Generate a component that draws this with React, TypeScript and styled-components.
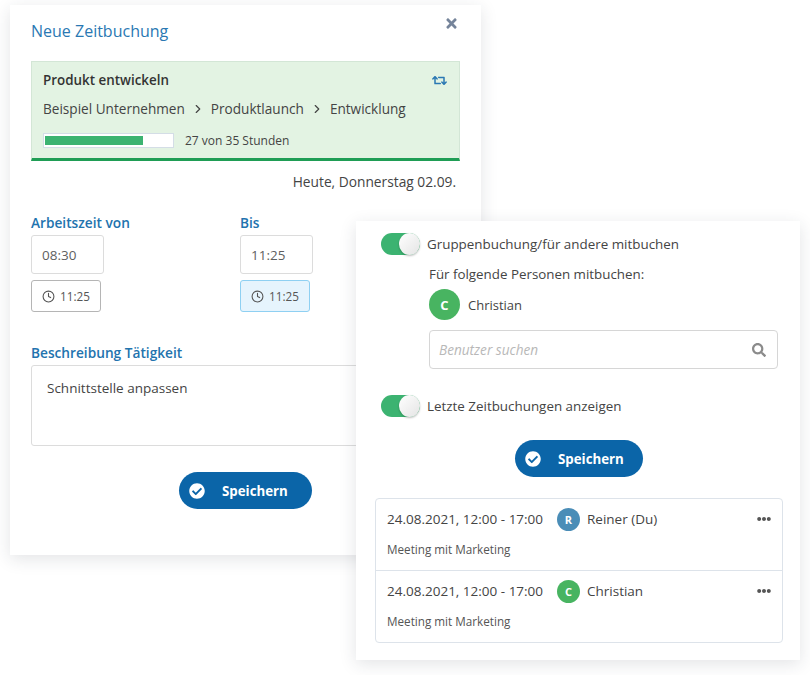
import React from "react";
import styled, { createGlobalStyle } from "styled-components";
import { Clock, ChevronRight } from "lucide-react";
import { FaCheckCircle, FaEllipsisH, FaRetweet, FaSearch, FaTimes } from "react-icons/fa";

const GlobalStyle = createGlobalStyle`
  html, body { margin: 0; padding: 0; background: #fff; }
  body { font-family: "Open Sans", "Noto Sans", sans-serif; color: #3c4043; }
  * { box-sizing: border-box; }
`;

const Canvas = styled.div`
  position: relative;
  width: 810px;
  height: 675px;
  overflow: hidden;
`;

const Card = styled.section`
  position: absolute;
  background: #fff;
  box-shadow: 0 4px 16px rgba(40, 50, 60, 0.13);
`;

const BookingCard = styled(Card)`
  left: 10px;
  top: 5px;
  width: 471px;
  height: 550px;
  padding: 14px 21px 0;
`;

const GroupCard = styled(Card)`
  left: 356px;
  top: 221px;
  width: 444px;
  height: 439px;
  padding: 12px 17px 0 19px;
`;

const Header = styled.header`
  display: flex;
  justify-content: space-between;
  align-items: flex-start;
  height: 42px;
`;

const Title = styled.h1`
  margin: 0;
  font-size: 16px;
  line-height: 24px;
  font-weight: 400;
  color: #2a78b3;
`;

const Close = styled.span`
  display: flex;
  color: #75849a;
  font-size: 15px;
  margin: -3px 1px 0 0;
`;

const ProjectPanel = styled.div`
  height: 100px;
  background: #e3f3e3;
  border: 1px solid #d3e6d6;
  border-bottom: 3px solid #1f9d55;
  padding: 8px 12px 0 11px;
`;

const PanelTop = styled.div`
  display: flex;
  justify-content: space-between;
  align-items: center;
  height: 20px;
`;

const ProjectName = styled.strong`
  font-size: 13.4px;
  font-weight: 600;
  color: #333;
`;

const SwapIcon = styled.span`
  display: flex;
  color: #2a78b3;
  font-size: 15px;
`;

const Breadcrumb = styled.div`
  display: flex;
  align-items: center;
  gap: 6px;
  margin-top: 9px;
  font-size: 13.6px;
  line-height: 20px;
  color: #444;
`;

const ProgressRow = styled.div`
  display: flex;
  align-items: center;
  gap: 11px;
  margin-top: 12px;
  font-size: 12px;
  color: #444;
`;

const ProgressTrack = styled.div`
  width: 131px;
  height: 15px;
  background: #fff;
  border: 1px solid #d4dde6;
  padding: 2px 1px;
`;

const ProgressFill = styled.div`
  height: 100%;
  background: #3cb371;
`;

const ProgressLabel = styled.span`
  margin-top: 1px;
`;

const DateLine = styled.div`
  text-align: right;
  margin-top: 11px;
  padding-right: 4px;
  font-size: 13.75px;
  line-height: 20px;
  color: #444;
`;

const TimeGrid = styled.div`
  display: grid;
  grid-template-columns: 209px 1fr;
  margin-top: 21px;
`;

const TimeColumn = styled.div`
  display: flex;
  flex-direction: column;
  align-items: flex-start;
`;

const FieldLabel = styled.label`
  display: block;
  font-size: 13.7px;
  font-weight: 600;
  line-height: 20px;
  color: #2273ae;
`;

const TimeInput = styled.div`
  width: 73px;
  height: 39px;
  margin-top: 2px;
  padding-left: 10px;
  display: flex;
  align-items: center;
  font-size: 13.5px;
  color: #5f5f5f;
  border: 1px solid #dcdcdc;
  border-radius: 3px;
`;

const NowButton = styled.button<{ $active?: boolean }>`
  width: 70px;
  height: 32px;
  margin-top: 6px;
  padding: 0;
  display: flex;
  align-items: center;
  justify-content: center;
  gap: 5px;
  font-family: inherit;
  font-size: 11.7px;
  color: #555;
  background: ${(p) => (p.$active ? "#e6f4fd" : "#fff")};
  border: 1px solid ${(p) => (p.$active ? "#8fd0f2" : "#b5b5b5")};
  border-radius: 3px;
`;

const DescriptionLabel = styled(FieldLabel)`
  margin-top: 31px;
`;

const TextArea = styled.div`
  height: 81px;
  margin-top: 2px;
  padding: 12px 15px;
  font-size: 13.5px;
  line-height: 20px;
  color: #444;
  border: 1px solid #dcdcdc;
  border-radius: 3px;
`;

const SaveRow = styled.div<{ $top: number }>`
  display: flex;
  justify-content: center;
  margin-top: ${(p) => p.$top}px;
`;

const SaveButton = styled.button<{ $width: number }>`
  width: ${(p) => p.$width}px;
  height: 37px;
  padding: 0 0 0 10px;
  display: flex;
  align-items: center;
  gap: 17px;
  font-family: inherit;
  font-size: 13.3px;
  font-weight: 700;
  color: #fff;
  background: #0b65a8;
  border: none;
  border-radius: 19px;
  svg { font-size: 16px; }
`;

const ToggleRow = styled.div<{ $top?: number }>`
  display: flex;
  align-items: center;
  gap: 7px;
  height: 22px;
  margin-top: ${(p) => p.$top ?? 0}px;
  padding-left: 6px;
  font-size: 13.4px;
  color: #444;
`;

const Toggle = styled.span`
  position: relative;
  display: block;
  width: 39px;
  height: 22px;
  border-radius: 11px;
  background: #3cb371;
  &::after {
    content: "";
    position: absolute;
    right: 0;
    top: 0;
    width: 21px;
    height: 22px;
    border-radius: 50%;
    background: linear-gradient(135deg, #fff, #e4e4e4);
    box-shadow: 0 1px 2px rgba(0, 0, 0, 0.25);
  }
`;

const Mitbuchen = styled.div`
  margin: 9px 0 0 54px;
  font-size: 13.35px;
  line-height: 20px;
  color: #444;
`;

const Person = styled.div`
  display: flex;
  align-items: center;
  gap: 8px;
  margin-top: 5px;
  font-size: 13px;
  color: #444;
`;

const Avatar = styled.span<{ $size: number; $color: string }>`
  display: flex;
  align-items: center;
  justify-content: center;
  width: ${(p) => p.$size}px;
  height: ${(p) => p.$size}px;
  border-radius: 50%;
  flex: none;
  background: ${(p) => p.$color};
  color: #fff;
  font-weight: 700;
  font-size: ${(p) => (p.$size > 25 ? 13 : 11)}px;
`;

const SearchBox = styled.div`
  display: flex;
  align-items: center;
  justify-content: space-between;
  width: 349px;
  height: 39px;
  margin: 10px 0 0 54px;
  padding: 0 11px 0 9px;
  border: 1px solid #d6d6d6;
  border-radius: 4px;
  font-size: 13.6px;
  font-style: italic;
  color: #b8b8b8;
  svg { color: #8b8b8b; font-size: 14px; }
`;

const BookingList = styled.div`
  width: 408px;
  height: 145px;
  margin-top: 21px;
  border: 1px solid #dde3ea;
  border-radius: 4px;
`;

const BookingItem = styled.div`
  height: 71px;
  padding: 8px 11px 0;
  & + & {
    border-top: 1px solid #dde3ea;
    height: 72px;
  }
`;

const BookingHead = styled.div`
  display: flex;
  align-items: center;
  height: 24px;
  font-size: 13.5px;
  color: #444;
`;

const BookingTime = styled.span`
  width: 170px;
`;

const BookingName = styled.span`
  margin-left: 7px;
  flex: 1;
`;

const More = styled.span`
  display: flex;
  color: #555;
  font-size: 14px;
`;

const BookingNote = styled.div`
  margin-top: 10px;
  font-size: 11.7px;
  line-height: 16px;
  color: #555;
`;

const bookings = [
  { name: "Reiner (Du)", initial: "R", color: "#4a8db7" },
  { name: "Christian", initial: "C", color: "#48b461" },
];

function Save({ width }: { width: number }) {
  return (
    <SaveButton $width={width} type="button">
      <FaCheckCircle />
      Speichern
    </SaveButton>
  );
}

export default function App() {
  return (
    <Canvas>
      <GlobalStyle />
      <BookingCard>
        <Header>
          <Title>Neue Zeitbuchung</Title>
          <Close>
            <FaTimes />
          </Close>
        </Header>
        <ProjectPanel>
          <PanelTop>
            <ProjectName>Produkt entwickeln</ProjectName>
            <SwapIcon>
              <FaRetweet />
            </SwapIcon>
          </PanelTop>
          <Breadcrumb>
            Beispiel Unternehmen
            <ChevronRight size={14} />
            Produktlaunch
            <ChevronRight size={14} />
            Entwicklung
          </Breadcrumb>
          <ProgressRow>
            <ProgressTrack>
              <ProgressFill style={{ width: `${(27 / 35) * 100}%` }} />
            </ProgressTrack>
            <ProgressLabel>27 von 35 Stunden</ProgressLabel>
          </ProgressRow>
        </ProjectPanel>
        <DateLine>Heute, Donnerstag 02.09.</DateLine>
        <TimeGrid>
          <TimeColumn>
            <FieldLabel>Arbeitszeit von</FieldLabel>
            <TimeInput>08:30</TimeInput>
            <NowButton type="button">
              <Clock size={13} />
              11:25
            </NowButton>
          </TimeColumn>
          <TimeColumn>
            <FieldLabel>Bis</FieldLabel>
            <TimeInput>11:25</TimeInput>
            <NowButton type="button" $active>
              <Clock size={13} />
              11:25
            </NowButton>
          </TimeColumn>
        </TimeGrid>
        <DescriptionLabel>Beschreibung Tätigkeit</DescriptionLabel>
        <TextArea>Schnittstelle anpassen</TextArea>
        <SaveRow $top={26}>
          <Save width={133} />
        </SaveRow>
      </BookingCard>

      <GroupCard>
        <ToggleRow>
          <Toggle />
          Gruppenbuchung/für andere mitbuchen
        </ToggleRow>
        <Mitbuchen>
          Für folgende Personen mitbuchen:
          <Person>
            <Avatar $size={31} $color="#48b461">C</Avatar>
            Christian
          </Person>
        </Mitbuchen>
        <SearchBox>
          Benutzer suchen
          <FaSearch />
        </SearchBox>
        <ToggleRow $top={26}>
          <Toggle />
          Letzte Zeitbuchungen anzeigen
        </ToggleRow>
        <SaveRow $top={23}>
          <Save width={128} />
        </SaveRow>
        <BookingList>
          {bookings.map((b) => (
            <BookingItem key={b.name}>
              <BookingHead>
                <BookingTime>24.08.2021, 12:00 - 17:00</BookingTime>
                <Avatar $size={23} $color={b.color}>{b.initial}</Avatar>
                <BookingName>{b.name}</BookingName>
                <More>
                  <FaEllipsisH />
                </More>
              </BookingHead>
              <BookingNote>Meeting mit Marketing</BookingNote>
            </BookingItem>
          ))}
        </BookingList>
      </GroupCard>
    </Canvas>
  );
}
